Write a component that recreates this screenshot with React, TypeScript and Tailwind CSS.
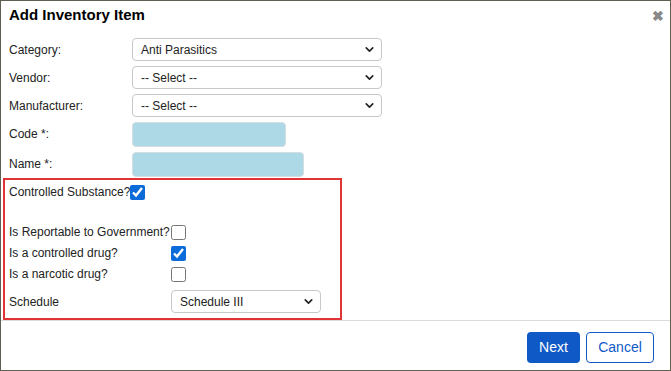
import { ChevronDown } from 'lucide-react'

type SelectProps = {
  value: string
  width: string
}

function FakeSelect({ value, width }: SelectProps) {
  return (
    <div
      className={`${width} flex h-[23px] items-center justify-between rounded-[4px] border border-[#c8c8c8] bg-white pl-[8px] pr-[5px] text-[12px] text-[#222]`}
    >
      <span>{value}</span>
      <ChevronDown className="h-[13px] w-[13px] text-[#222]" strokeWidth={3} />
    </div>
  )
}

function Check({ checked }: { checked?: boolean }) {
  return (
    <input
      type="checkbox"
      defaultChecked={checked}
      className="m-0 h-[15px] w-[15px] accent-[#0b6bd8]"
    />
  )
}

export default function App() {
  return (
    <div
      className="flex h-[371px] w-[671px] flex-col border border-[#5e6150] bg-white text-[#222]"
      style={{ fontFamily: '"Liberation Sans", Arial, sans-serif' }}
    >
      {/* Header */}
      <div className="flex h-[28px] items-center justify-between pl-[8px] pr-[6px] pt-[1px]">
        <h1 className="text-[15px] font-bold text-black">Add Inventory Item</h1>
        <span className="text-[14px] font-bold leading-none text-[#888]">✖</span>
      </div>

      {/* Body */}
      <div className="flex-1 pl-[8px] pt-[9px]">
        <div className="grid grid-cols-[123px_auto] items-center gap-y-[5px] text-[12px]">
          <label>Category:</label>
          <FakeSelect value="Anti Parasitics" width="w-[250px]" />
          <label>Vendor:</label>
          <FakeSelect value="-- Select --" width="w-[250px]" />
          <label>Manufacturer:</label>
          <FakeSelect value="-- Select --" width="w-[250px]" />
          <label className="self-start pt-[3px]">Code *:</label>
          <div className="h-[25px] w-[154px] rounded-[4px] border border-[#d4dde0] bg-[#add8e6]" />
          <label className="self-start pt-[3px]">Name *:</label>
          <div className="h-[25px] w-[172px] rounded-[4px] border border-[#d4dde0] bg-[#add8e6]" />
        </div>

        {/* Controlled substance block */}
        <div className="-ml-[6px] mt-px h-[142px] w-[339px] border-2 border-[#e03336] pl-[4px] pt-[3px] text-[12px]">
          <div className="flex items-center">
            <span>Controlled Substance?</span>
            <Check checked />
          </div>
          <div className="mt-[22px] grid grid-cols-[162px_auto] items-center gap-y-[3px]">
            <span>Is Reportable to Government?</span>
            <Check />
            <span>Is a controlled drug?</span>
            <Check checked />
            <span>Is a narcotic drug?</span>
            <Check />
            <span className="pt-[5px]">Schedule</span>
            <FakeSelect value="Schedule III" width="w-[150px] mt-[4px] pl-[8px]" />
          </div>
        </div>
      </div>

      {/* Footer */}
      <div className="flex h-[50px] items-start justify-end gap-[6px] border-t border-[#dcdcdc] pr-[16px] pt-[11px]">
        <button className="h-[31px] w-[53px] rounded-[4px] bg-[#0f59c6] text-[14px] text-white">
          Next
        </button>
        <button className="h-[31px] w-[68px] rounded-[4px] border border-[#0f59c6] bg-white text-[14px] text-[#0f59c6]">
          Cancel
        </button>
      </div>
    </div>
  )
}
